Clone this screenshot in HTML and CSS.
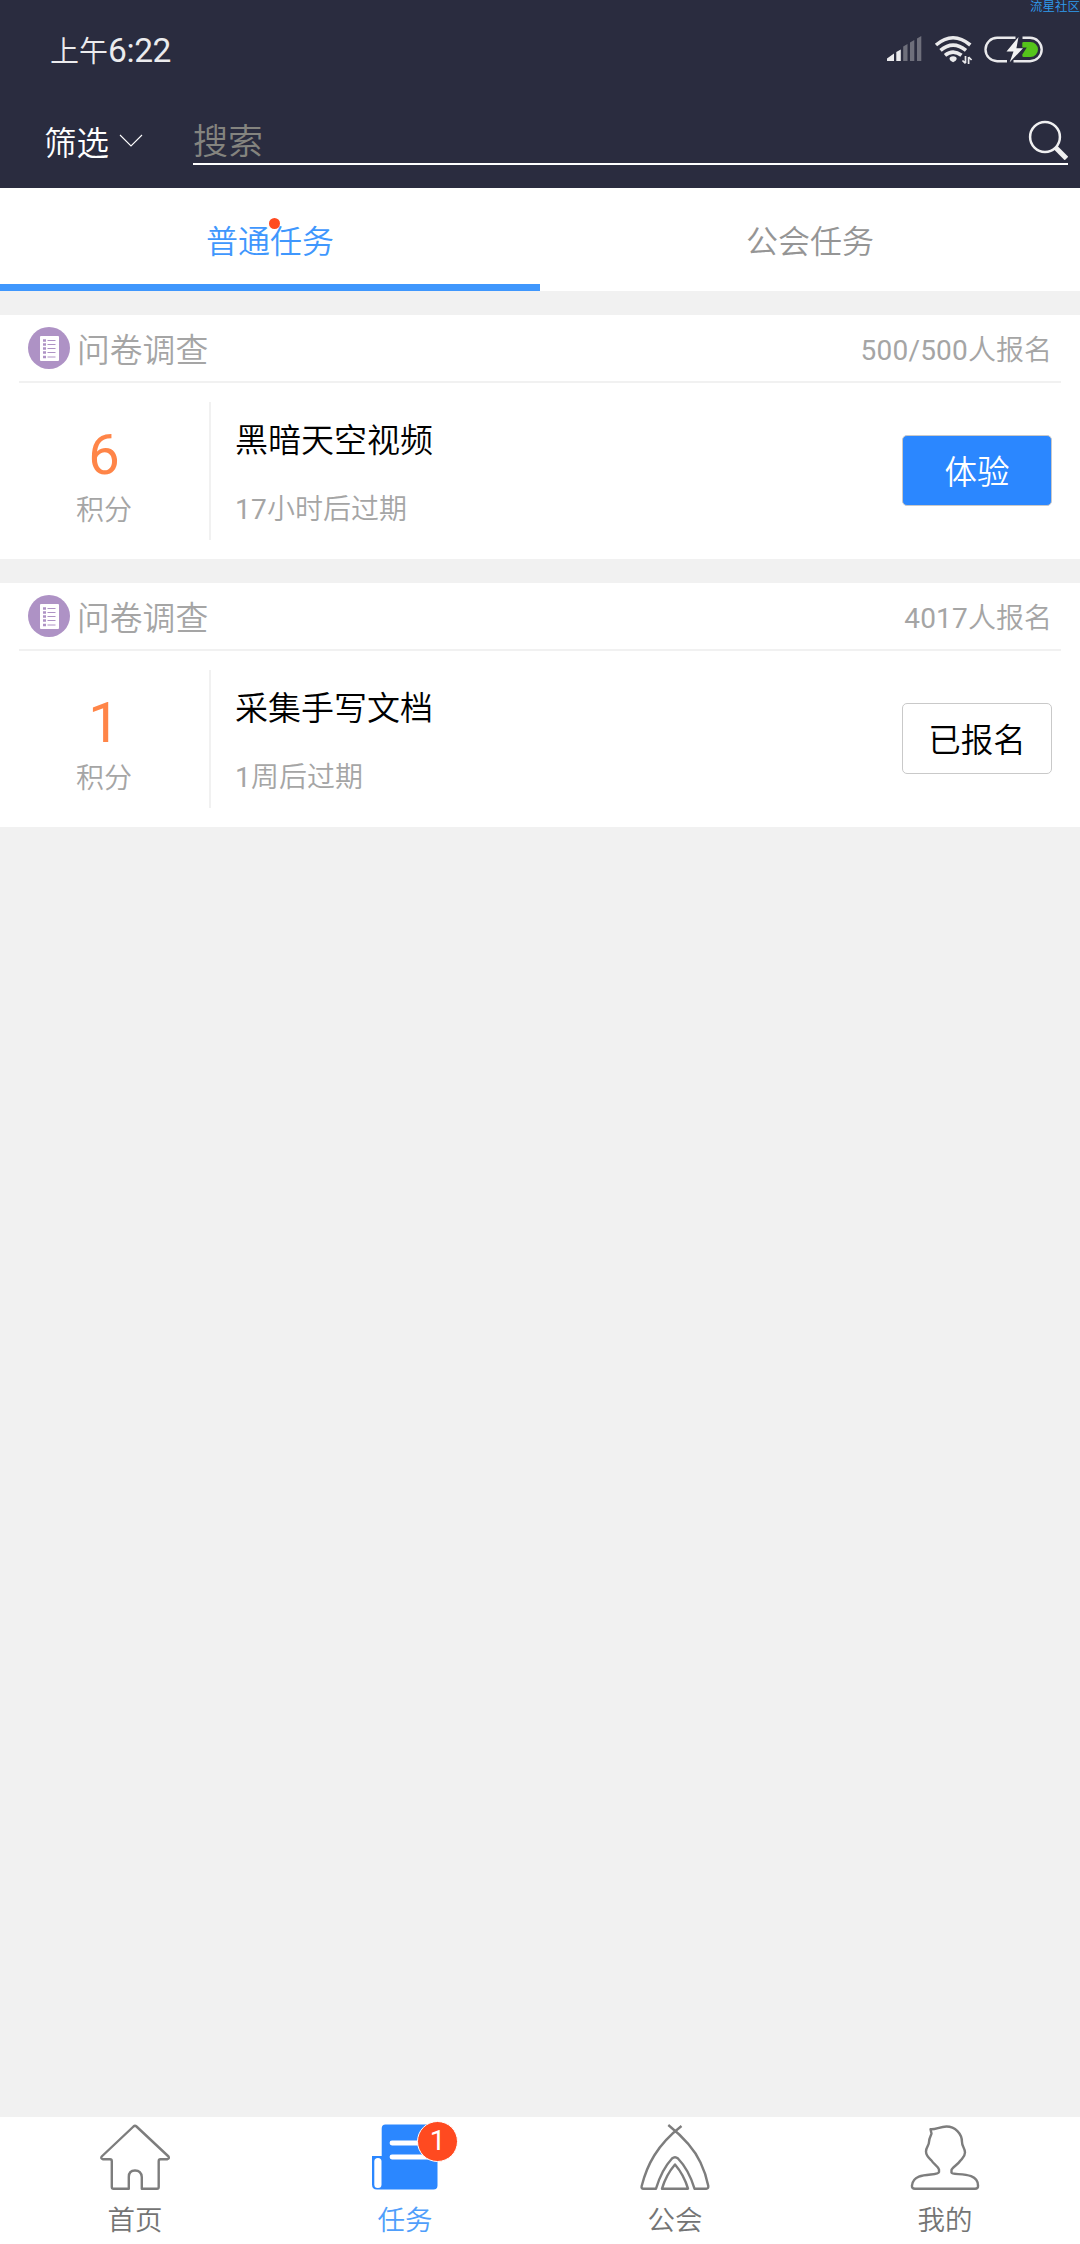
FILE: index.html
```html
<!DOCTYPE html>
<html lang="zh-CN">
<head>
<meta charset="utf-8">
<title>任务</title>
<link rel="stylesheet" href="styles.css">
</head>
<body>
<div class="app">
  <header class="header">
    <div class="watermark">流星社区</div>
    <div class="status">
      <div class="time"><span class="time-period">上午</span><span>6:22</span></div>
      <svg class="status-icons" width="160" height="32" viewBox="885 33 160 32" fill="none">
        <g fill="#eaeaec">
          <path d="M887 61v-2.500l7-5V61zM896.300 61v-9l4.500-2.500V61z"/>
          <path fill="#6e6f7b" d="M903.200 61V46.500l4.300-2.500v17zM910 61V42.500l4.300-2.500v21zM917 61V38.500l4.300-2.500v25z"/>
        </g>
        <g stroke="#eaeaec" stroke-width="3.600">
          <path d="M936 45q17-14.500 34.300 0M940.500 50.300q12.500-10.500 25.500 0M945 55.300q8-6.500 16.500 0"/>
          <path stroke-width="1.700" d="M965.500 56v7M968.600 57v7M962.500 60.500l3 3M968.600 57l3 3"/>
        </g>
        <path fill="#eaeaec" d="M949.500 59a3.600 2.800 0 0 1 7.200 0q-.3 2-3.600 3.200q-3.300-1.200-3.600-3.200z"/>
        <path stroke="#eaeaec" stroke-width="2.400" d="M1015.500 37.800h-18.300a11.700 11.700 0 0 0 0 23.400h9.800M1022.500 37.800h7.500a11.700 11.700 0 0 1 0 23.400h-16.500"/>
        <path fill="#55c51b" d="M1023.500 42h7a7.500 7.500 0 0 1 0 15h-7q-1.200 0-1.200-1.500v-1l4.500-7h-4.500V43q0-1 1.200-1z"/>
        <path fill="#f3f3f4" d="M1018.500 37l-12 14.500h7l-3.800 10.800L1023 48.300h-6.600z"/>
      </svg>
    </div>
    <div class="search-row">
      <div class="filter">筛选
        <svg class="chevron" width="24" height="14" viewBox="0 0 24 14"><path d="M1 1l11 11L23 1" fill="none" stroke="#fff" stroke-width="1.100"/></svg>
      </div>
      <div class="search">
        <span>搜索</span>
        <svg class="magnifier" width="40" height="40" viewBox="0 0 40 40" fill="none" stroke="#f0f0f1"><circle cx="17" cy="17" r="14.900" stroke-width="2.500"/><path d="M27.500 27.500l11 11" stroke-width="5"/></svg>
      </div>
    </div>
  </header>

  <nav class="tabs">
    <div class="tab tab-active"><span class="tab-label">普通任务<i class="dot"></i></span></div>
    <div class="tab"><span class="tab-label">公会任务</span></div>
  </nav>

  <main class="list">
    <article class="card">
      <div class="card-head">
        <svg class="survey" width="42" height="42" viewBox="0 0 42 42"><circle cx="21" cy="21" r="21" fill="#ae92c5"/><rect x="12" y="9" width="19" height="25" rx="1" fill="#fff"/><path d="M15 13.500h3M15 17.500h3M15 21.500h3M15 25.500h3M15 30h3" stroke="#ae92c5" stroke-width="2.600"/><path d="M19.500 13.500h8M19.500 17.500h8M19.500 21.500h8M19.500 25.500h8M19.500 30h8" stroke="#ae92c5" stroke-width="1"/></svg>
        <span class="category">问卷调查</span>
        <span class="count"><span class="num">500/500</span>人报名</span>
      </div>
      <div class="card-body">
        <div class="points"><span class="points-value">6</span><span class="points-unit">积分</span></div>
        <div class="info"><span class="title">黑暗天空视频</span><span class="expiry"><span class="num">17</span>小时后过期</span></div>
        <button class="btn btn-primary">体验</button>
      </div>
    </article>
    <article class="card">
      <div class="card-head">
        <svg class="survey" width="42" height="42" viewBox="0 0 42 42"><circle cx="21" cy="21" r="21" fill="#ae92c5"/><rect x="12" y="9" width="19" height="25" rx="1" fill="#fff"/><path d="M15 13.500h3M15 17.500h3M15 21.500h3M15 25.500h3M15 30h3" stroke="#ae92c5" stroke-width="2.600"/><path d="M19.500 13.500h8M19.500 17.500h8M19.500 21.500h8M19.500 25.500h8M19.500 30h8" stroke="#ae92c5" stroke-width="1"/></svg>
        <span class="category">问卷调查</span>
        <span class="count"><span class="num">4017</span>人报名</span>
      </div>
      <div class="card-body">
        <div class="points"><span class="points-value">1</span><span class="points-unit">积分</span></div>
        <div class="info"><span class="title">采集手写文档</span><span class="expiry"><span class="num">1</span>周后过期</span></div>
        <button class="btn">已报名</button>
      </div>
    </article>
  </main>

  <nav class="bottom-nav">
    <div class="nav-item">
      <svg class="nav-icon" width="70" height="68" viewBox="0 0 70 68"><path d="M33.500 2.500L1.700 32.500q-1.200 2 1 2.700H10q1.800 0 1.800 2V63q0 1.700 1.700 1.700H28.800V53q0-6.500 6.200-6.500T41.800 53v11.700H57q1.700 0 1.700-1.700V37.200q0-2 1.800-2h7q2.200-.7 1-2.700L36.500 2.500q-1.500-1.300-3 0z"/></svg>
      <span>首页</span>
    </div>
    <div class="nav-item nav-active">
      <div class="icon-wrap">
        <svg class="nav-icon" width="70" height="68" viewBox="0 0 70 68"><path stroke="none" fill="#2b87ff" d="M15.500 .5H62.500q5 0 5 5v56q0 4-4 4H7q-5 0-5-5V32h9.700V4.500q0-4 3.800-4z"/><rect x="4.300" y="34" width="7.200" height="30" rx="3.500" stroke="none" fill="#fff"/><path d="M22 19h40M22 33h40" stroke="#fff" stroke-width="4.800" stroke-linecap="round"/></svg>
        <span class="badge">1</span>
      </div>
      <span>任务</span>
    </div>
    <div class="nav-item">
      <svg class="nav-icon" width="70" height="68" viewBox="0 0 70 68"><path d="M28.300 1Q52 20 60.500 38.500Q66 50 68.300 62q.2 2.700-2 2.700H54.500Q49 46 38 34.500q-3-2.600-6 0Q21.500 46 16 64.700H3.500q-2.500 0-1.800-2.700C7 41 17 21 41.500 2"/><path d="M35 40.500Q44 51 48 64.700H22Q26 51 35 40.500z"/></svg>
      <span>公会</span>
    </div>
    <div class="nav-item">
      <svg class="nav-icon" width="70" height="68" viewBox="0 0 70 68"><path d="M20.500 5.200C25 6 30 2.500 36.500 2.500C45 2.500 52 9.500 52 18C52 23 55 24 55 28.500C55 33 52 34.500 50.500 36.500C48 40.500 42 43.500 41.500 46V48.500C42 52 68 46.500 68 61.500Q68.500 64.700 65 64.700H5Q1.500 64.700 2 61.500C3.500 46.500 28 53 29 48V45.500C28 42 23 39.500 21.500 36.500C19.500 34.500 16 32 16 27.500C16 23 19 22 19 18C19 14 21.500 11 21.500 9.500z"/></svg>
      <span>我的</span>
    </div>
  </nav>
</div>
</body>
</html>
```

FILE: styles.css
```css
* { box-sizing: border-box; }
body {
  margin: 0;
  font-family: Roboto, "Noto Sans CJK SC", sans-serif;
  font-weight: 350;
  background: #f1f1f1;
}
svg { display: block; flex: none; }
.num { font-weight: 400; letter-spacing: .2px; }
.app {
  width: 1080px;
  height: 2244px;
  display: flex;
  flex-direction: column;
  overflow: hidden;
}

.header {
  position: relative;
  height: 188px;
  background: #2a2c3f;
  color: #fff;
}
.watermark {
  position: absolute;
  top: -1px;
  right: 0;
  white-space: nowrap;
  font-size: 12.5px;
  line-height: 15px;
  color: #2f9df0;
}
.status {
  height: 100px;
  padding: 0 35px 3px 50px;
  display: flex;
  align-items: center;
  justify-content: space-between;
}
.time {
  padding-top: 5px;
  font-size: 33.5px;
  font-weight: 400;
  line-height: 40px;
  color: #ebebed;
  letter-spacing: -.4px;
}
.time-period { font-size: 29px; font-weight: 350; letter-spacing: 0; }
.search-row {
  height: 65px;
  padding-right: 12px;
  display: flex;
}
.filter {
  width: 193px;
  height: 81px;
  padding-left: 44px;
  display: flex;
  align-items: center;
  gap: 10px;
  font-size: 32.5px;
}
.search {
  flex: 1;
  height: 65px;
  border-bottom: 2px solid #fff;
  display: flex;
  align-items: center;
  justify-content: space-between;
  font-size: 35px;
  line-height: 40px;
  padding-top: 17px;
  color: #84847f;
}
.search span { padding-top: 5px; }

.tabs {
  height: 103px;
  display: flex;
  background: #fff;
}
.tab {
  flex: 1;
  display: flex;
  align-items: center;
  justify-content: center;
  border-bottom: 7px solid transparent;
  padding-top: 5px;
  font-size: 32px;
  color: #959595;
}
.tab-active { color: #3f97fd; border-bottom-color: #3f97fd; }
.tab-label { position: relative; }
.dot {
  position: absolute;
  left: 63px;
  top: 2px;
  width: 11px;
  height: 11px;
  border-radius: 50%;
  background: #ff4a20;
}

.list {
  flex: 1;
  padding-top: 24px;
  display: flex;
  flex-direction: column;
  gap: 24px;
}
.card { height: 244px; padding: 0 19px; background: #fff; }
.card-head {
  height: 68px;
  padding: 0 9px;
  display: flex;
  align-items: center;
  border-bottom: 2px solid #f1f1f1;
  color: #a5a5a5;
}
.category { margin-left: 7px; padding-bottom: 2px; font-size: 32.8px; }
.count { margin-left: auto; font-size: 28px; }
.card-body {
  height: 176px;
  padding: 17px 9px 19px 0;
  display: flex;
  align-items: center;
}
.points {
  width: 192px;
  height: 138px;
  padding: 22px 20px 0 0;
  border-right: 2px solid #f1f1f1;
  display: flex;
  flex-direction: column;
  align-items: center;
  position: relative;
  top: 1px;
}
.points-value { font-size: 56px; line-height: 62px; font-weight: 400; color: #ff8548; }
.points-unit { margin-top: 1px; font-size: 28px; line-height: 48px; color: #a5a5a5; }
.info {
  flex: 1;
  height: 138px;
  padding-left: 24px;
  display: flex;
  flex-direction: column;
}
.title { margin-top: 15px; font-size: 33px; line-height: 50px; color: #000; }
.expiry { margin-top: 22px; font-size: 28px; line-height: 44px; color: #a5a5a5; }
.btn {
  width: 150px;
  height: 71px;
  padding: 0 0 2px;
  border: 1px solid #c9c9c9;
  border-radius: 5px;
  background: #fff;
  color: #000;
  font: inherit;
  font-size: 32.5px;
}
.btn-primary { background: #2b87ff; color: #fff; }

.bottom-nav {
  height: 127px;
  display: flex;
  background: #fff;
}
.nav-item {
  flex: 1;
  padding-top: 7px;
  display: flex;
  flex-direction: column;
  align-items: center;
  gap: 9px;
  font-size: 27.5px;
  line-height: 40px;
  color: #747474;
}
.nav-icon { fill: none; stroke: #7d7d7d; stroke-width: 2.4; stroke-linejoin: round; }
.nav-active { color: #4f9efb; }
.icon-wrap { position: relative; }
.badge {
  position: absolute;
  left: 47px;
  top: -3px;
  width: 41px;
  height: 41px;
  border: 1.5px solid #fff;
  border-radius: 50%;
  background: #ff4a20;
  color: #fff;
  font-size: 28px;
  font-weight: 400;
  line-height: 38px;
  text-align: center;
}
```
